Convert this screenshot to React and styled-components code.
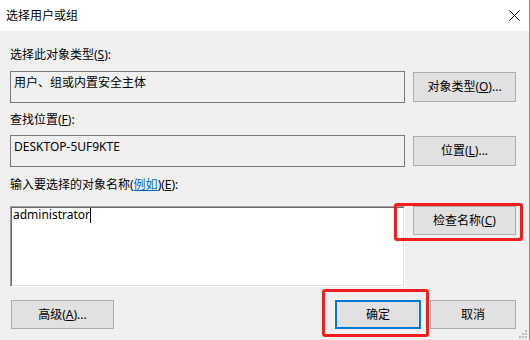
import React from 'react';
import styled, { createGlobalStyle } from 'styled-components';

const Global = createGlobalStyle`
  html, body { margin: 0; padding: 0; background: #f0f0f0; }
  body {
    font-family: "Noto Sans", "Noto Sans CJK SC", sans-serif;
    font-size: 12px;
    color: #000;
  }
`;

const Window = styled.div`
  position: relative;
  width: 530px;
  height: 340px;
  box-sizing: border-box;
  border-right: 1px solid #8a8a8a;
  background: #f0f0f0;
  display: flex;
  flex-direction: column;
  overflow: hidden;
`;

const TitleBar = styled.div`
  flex: none;
  height: 31px;
  background: #fff;
  display: flex;
  align-items: center;
  justify-content: space-between;
  padding-left: 6px;
`;

const Title = styled.span`
  font-size: 12px;
  line-height: 16px;
`;

const Close = styled.div`
  width: 30px;
  height: 31px;
  display: flex;
  align-items: center;
  justify-content: center;
`;

const Body = styled.div`
  padding: 0 13px 0 10px;
  display: flex;
  flex-direction: column;
`;

const Label = styled.div`
  margin-top: ${p => p.$top}px;
  height: 16px;
  line-height: 16px;
  white-space: nowrap;
`;

const Row = styled.div`
  margin-top: ${p => p.$top}px;
  display: flex;
  gap: 8px;
  align-items: ${p => p.$align || 'center'};
`;

const ReadBox = styled.div`
  width: 395px;
  height: 32px;
  box-sizing: border-box;
  border: 1px solid #7a7a7a;
  padding: 3px 3px;
  line-height: 16px;
  background: #f0f0f0;
  white-space: nowrap;
`;

const EditBox = styled.div`
  width: 395px;
  height: 81px;
  box-sizing: border-box;
  background: #fff;
  border: 1px solid;
  border-color: #a0a0a0 #ffffff #ffffff #a0a0a0;
  box-shadow: inset 1px 1px 0 #696969, inset -1px -1px 0 #e3e3e3;
  padding: 0 2px;
  line-height: 16px;
  display: flex;
  align-items: flex-start;
`;

const Caret = styled.span`
  display: inline-block;
  width: 1px;
  height: 15px;
  margin-top: 1px;
  background: #000;
`;

const Button = styled.div`
  position: relative;
  flex: none;
  width: ${p => p.$w || 103}px;
  height: ${p => p.$h || 29}px;
  box-sizing: border-box;
  background: #e1e1e1;
  border: ${p => (p.$default ? '2px solid #0078d7' : '1px solid #adadad')};
  display: flex;
  align-items: center;
  justify-content: center;
  line-height: 16px;
  white-space: nowrap;
`;

const Highlight = styled.div`
  position: absolute;
  top: ${p => p.$t}px;
  left: ${p => p.$l}px;
  right: ${p => p.$r}px;
  bottom: ${p => p.$b}px;
  border: 3px solid #f01e1e;
  border-radius: 3px;
  pointer-events: none;
`;

const BottomRow = styled.div`
  margin-top: 13px;
  display: flex;
  justify-content: space-between;
  align-items: center;
  padding-left: 1px;
`;

const Group = styled.div`
  display: flex;
  gap: 9px;
`;

const Link = styled.span`
  color: #0066cc;
  text-decoration: underline;
`;

const Grip = styled.svg`
  position: absolute;
  right: 1px;
  bottom: 1px;
`;

export default function App() {
  return (
    <>
      <Global />
      <Window>
        <TitleBar>
          <Title>选择用户或组</Title>
          <Close>
            <svg width="11" height="11" viewBox="0 0 11 11">
              <path d="M0.5 0.5 L10.5 10.5 M10.5 0.5 L0.5 10.5" stroke="#000" strokeWidth="1" />
            </svg>
          </Close>
        </TitleBar>
        <Body>
          <Label $top={16}>选择此对象类型(<u>S</u>):</Label>
          <Row $top={8}>
            <ReadBox>用户、组或内置安全主体</ReadBox>
            <Button $h={30}>对象类型(<u>O</u>)...</Button>
          </Row>
          <Label $top={9}>查找位置(<u>F</u>):</Label>
          <Row $top={7}>
            <ReadBox>DESKTOP-5UF9KTE</ReadBox>
            <Button $h={30}>位置(<u>L</u>)...</Button>
          </Row>
          <Label $top={10}>
            输入要选择的对象名称(<Link>例如</Link>)(<u>E</u>):
          </Label>
          <Row $top={13} $align="flex-start">
            <EditBox>
              <span>administrator</span>
              <Caret />
            </EditBox>
            <Button>
              检查名称(<u>C</u>)
              <Highlight $t={-4} $l={-20} $r={-8} $b={-7} />
            </Button>
          </Row>
          <BottomRow>
            <Button>高级(<u>A</u>)...</Button>
            <Group>
              <Button $w={86} $default>
                确定
                <Highlight $t={-13} $l={-15} $r={-10} $b={-10} />
              </Button>
              <Button $w={86}>取消</Button>
            </Group>
          </BottomRow>
        </Body>
        <Grip width="10" height="10" viewBox="0 0 10 10">
          <rect x="7" y="1" width="2" height="2" fill="#bdbdbd" />
          <rect x="4" y="4" width="2" height="2" fill="#bdbdbd" />
          <rect x="7" y="4" width="2" height="2" fill="#bdbdbd" />
          <rect x="1" y="7" width="2" height="2" fill="#bdbdbd" />
          <rect x="4" y="7" width="2" height="2" fill="#bdbdbd" />
          <rect x="7" y="7" width="2" height="2" fill="#bdbdbd" />
        </Grip>
      </Window>
    </>
  );
}
